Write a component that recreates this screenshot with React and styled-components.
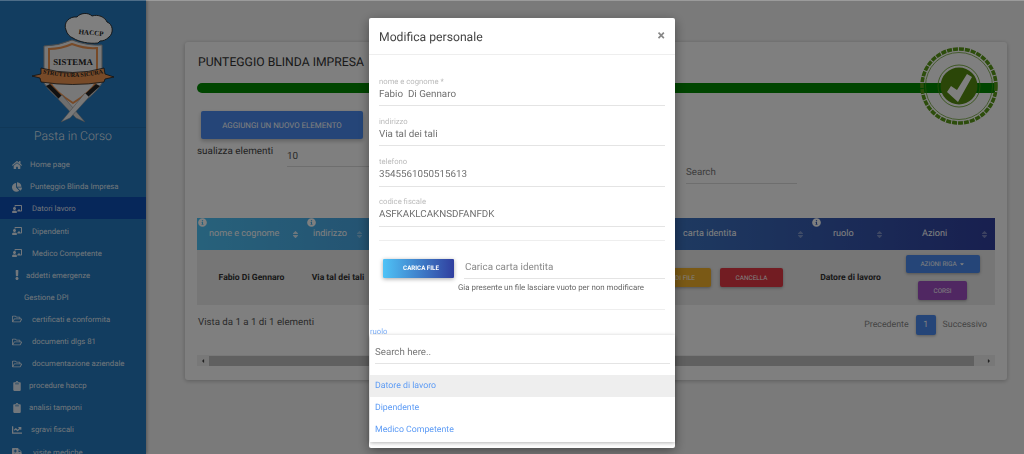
import styled, { createGlobalStyle } from 'styled-components'
import {
  FaHome,
  FaChartPie,
  FaChalkboardTeacher,
  FaExclamation,
  FaRegFolderOpen,
  FaClipboard,
  FaChartLine,
  FaAmbulance,
  FaSort,
  FaInfoCircle,
  FaCaretLeft,
  FaCaretRight,
  FaCaretDown,
} from 'react-icons/fa'

const GlobalStyle = createGlobalStyle`
  html, body {
    margin: 0;
    height: 100%;
    overflow: hidden;
    font-family: Roboto, "Liberation Sans", sans-serif;
    text-rendering: geometricPrecision;
  }
  * { box-sizing: border-box; }
  button { text-rendering: geometricPrecision; }
`

const Page = styled.div`
  display: flex;
  height: 454px;
  overflow: hidden;
  background: #f5f5f5;
`

const Sidebar = styled.aside`
  flex: 0 0 146px;
  background: #247ac0;
  color: rgba(255, 255, 255, 0.88);
  box-shadow: 1px 0 3px rgba(0, 0, 0, 0.3);
`

const LogoBox = styled.div`
  height: 128px;
  border-bottom: 1px solid rgba(0, 0, 0, 0.08);
  svg { display: block; }
`

const SiteName = styled.div`
  height: 25px;
  padding-top: 1px;
  font-size: 12.2px;
  line-height: 15px;
  text-align: center;
  font-weight: 300;
`

const NavList = styled.nav`
  display: flex;
  flex-direction: column;
`

const NavItem = styled.div`
  display: flex;
  align-items: center;
  height: 22.1px;
  flex: none;
  padding: 1.5px 0 0 12px;
  font-size: 7.75px;
  background: ${({ $active }) => ($active ? '#0c4eb4' : 'transparent')};
`

const NavIcon = styled.span`
  display: flex;
  width: ${({ $w }) => $w}px;
  flex: none;
  svg { width: 10px; height: 10px; }
`

const Main = styled.main`
  flex: 1;
  min-width: 0;
  padding: 42px 17px 0 39px;
`

const Card = styled.section`
  position: relative;
  height: 338px;
  padding: 12px;
  background: #fff;
  border-radius: 3px;
  box-shadow: 0 1px 4px rgba(0, 0, 0, 0.25);
`

const CardTitle = styled.h2`
  margin: 0 0 14px 1px;
  padding-top: 1px;
  height: 15px;
  font-size: 12.2px;
  line-height: 14px;
  font-weight: 400;
  color: #333;
`

const Progress = styled.div`
  height: 10px;
  background: #008a00;
  border-radius: 5px 0 0 5px;
`

const Stamp = styled.svg`
  position: absolute;
  right: 7px;
  top: 3px;
`

const AddButton = styled.button`
  display: block;
  width: 162px;
  height: 28px;
  margin: 18px 0 0 4px;
  border: 0;
  border-radius: 2px;
  background: #4a8bf0;
  color: #fff;
  font: 400 7.9px Roboto, sans-serif;
  box-shadow: 0 2px 4px rgba(0, 0, 0, 0.25);
`

const Controls = styled.div`
  display: flex;
  height: 41px;
  margin-top: 4px;
`

const LengthLabel = styled.span`
  width: 90px;
  padding-top: 2px;
  font-size: 9.9px;
  line-height: 14px;
  color: #444;
`

const LengthSelect = styled.div`
  width: 83px;
  height: 24px;
  padding-top: 7px;
  font-size: 9.9px;
  line-height: 14px;
  color: #555;
  border-bottom: 1px solid #ddd;
`

const SearchBox = styled.div`
  width: 111px;
  height: 24px;
  margin: 17px 0 0 316px;
  padding-top: 6px;
  font-size: 9.7px;
  line-height: 14px;
  color: #777;
  border-bottom: 1px solid #ddd;
`

const TableWrap = styled.div`
  margin-top: 34px;
`

const TableGrid = styled.div`
  display: grid;
  grid-template-columns: 109px 64px 150px 150px 141px 79px 105px;
`

const HeadRow = styled(TableGrid)`
  height: 32px;
  color: #fff;
  background: linear-gradient(to right, #4fc3f7, #303f9f);
`

const HeadCell = styled.div`
  position: relative;
  display: flex;
  align-items: center;
  justify-content: space-between;
  padding: 0 7px 0 ${({ $left }) => $left}px;
  font-size: 9.1px;
  white-space: nowrap;
`

const InfoBadge = styled(FaInfoCircle)`
  position: absolute;
  left: 1px;
  top: 0;
  width: 9px;
  height: 9px;
  color: #fff;
`

const SortIcon = styled(FaSort)`
  width: 7px;
  height: 9px;
  flex: none;
  opacity: ${({ $current }) => ($current ? 0.8 : 0.35)};
`

const BodyRow = styled(TableGrid)`
  height: 55px;
  background: #ececec;
`

const BodyCell = styled.div`
  display: flex;
  align-items: center;
  justify-content: ${({ $end }) => ($end ? 'flex-end' : 'center')};
  gap: 9px;
  padding-right: ${({ $end }) => ($end ? '28px' : '0')};
  font-size: 8.6px;
  font-weight: 700;
  color: #333;
  white-space: nowrap;
`

const ActionCell = styled.div`
  display: flex;
  flex-direction: column;
  align-items: center;
  gap: 8px;
  padding-top: 5px;
`

const RowButton = styled.button`
  display: flex;
  align-items: center;
  justify-content: center;
  gap: 2px;
  flex: none;
  width: ${({ $w }) => ($w ? `${$w}px` : 'auto')};
  height: ${({ $h }) => $h || 19}px;
  padding: 0 16px;
  border: 0;
  border-radius: 2px;
  background: ${({ $bg }) => $bg};
  color: #fff;
  font: 400 6.4px Roboto, sans-serif;
  white-space: nowrap;
  box-shadow: 0 1px 3px rgba(0, 0, 0, 0.3);
  svg { width: 6px; height: 6px; flex: none; }
`

const Footer = styled.div`
  display: flex;
  align-items: center;
  justify-content: space-between;
  height: 20px;
  margin-top: 10px;
  padding: 0 8px 0 1px;
  font-size: 9.7px;
  color: #555;
`

const RowCount = styled.span`
  margin-bottom: 6px;
`

const Pagination = styled.div`
  display: flex;
  align-items: center;
  gap: 7px;
  font-size: 8.8px;
  color: #888;
`

const PageNumber = styled.span`
  width: 20px;
  height: 20px;
  border-radius: 2px;
  line-height: 20px;
  text-align: center;
  color: #fff;
  background: #4a8bf0;
  box-shadow: 0 1px 3px rgba(0, 0, 0, 0.3);
`

const ScrollBar = styled.div`
  display: flex;
  align-items: center;
  justify-content: space-between;
  height: 11px;
  margin-top: 20px;
  background: #f1f1f1;
  color: #444;
  svg { width: 6px; height: 6px; flex: none; margin: 0 3px; }
`

const ScrollThumb = styled.div`
  flex: 1;
  height: 10px;
  margin: 0 9px 0 0;
  background: #c1c1c1;
`

const Backdrop = styled.div`
  position: fixed;
  inset: 0;
  background: rgba(0, 0, 0, 0.5);
  border-top: 1px solid rgba(255, 255, 255, 0.25);
`

const Modal = styled.div`
  position: fixed;
  left: 369px;
  top: 18px;
  width: 306px;
  height: 430px;
  display: flex;
  flex-direction: column;
  background: #fff;
  border-radius: 2px;
  box-shadow: 0 3px 12px rgba(0, 0, 0, 0.4);
`

const ModalHeader = styled.header`
  display: flex;
  align-items: center;
  justify-content: space-between;
  height: 37px;
  flex: none;
  padding: 0 10px;
  border-bottom: 1px solid #eee;
`

const ModalTitle = styled.h3`
  margin: 2px 0 0;
  font-size: 12.2px;
  font-weight: 400;
  color: #444;
`

const CloseMark = styled.span`
  font-size: 14px;
  font-weight: 700;
  line-height: 14px;
  color: #888;
`

const Form = styled.div`
  padding: 20px 10px 0;
`

const Field = styled.div`
  height: 40.3px;
  padding-top: 10.5px;
  border-bottom: 1px solid #e4e4e4;
  &:first-child { height: 31px; padding-top: 1.5px; }
`

const FieldLabel = styled.div`
  font-size: 7.7px;
  line-height: 9px;
  color: #bbb;
`

const FieldValue = styled.div`
  margin-top: 2px;
  font-size: 9.8px;
  line-height: 14px;
  color: #707070;
  white-space: pre;
`

const Divider = styled.hr`
  margin: ${({ $top }) => $top}px 0 0;
  border: 0;
  border-top: 1px solid #eee;
`

const UploadRow = styled.div`
  display: flex;
  margin-top: 18px;
  padding-left: 4px;
`

const UploadButton = styled.button`
  width: 71px;
  height: 19px;
  padding: 0 0 0 5px;
  border: 0;
  border-radius: 1px;
  background: linear-gradient(to right, #4fc3f7, #303f9f);
  color: #fff;
  font: 700 6.2px Roboto, sans-serif;
  box-shadow: 0 1px 4px rgba(0, 0, 0, 0.35);
`

const UploadInput = styled.div`
  flex: 1;
  height: 20px;
  margin-left: 10px;
  padding: 2px 0 0 1px;
  font-size: 9.85px;
  line-height: 14px;
  color: #888;
  border-bottom: 1px solid #e4e4e4;
`

const UploadHint = styled.div`
  margin: 4px 0 0 79px;
  font-size: 7.9px;
  line-height: 10px;
  color: #666;
`

const RoleLabel = styled.div`
  margin: 17px 0 0 1px;
  font-size: 7.7px;
  line-height: 9px;
  color: #7fb0f7;
`

const RolePanel = styled.div`
  position: relative;
  height: 107px;
  margin: -1px 0 0 1px;
  background: #fff;
  box-shadow: 0 1px 4px rgba(0, 0, 0, 0.3);
`

const RoleSearch = styled.div`
  height: 29px;
  margin: 0 5px 0 5px;
  padding-top: 11px;
  font-size: 9.7px;
  line-height: 14px;
  color: #777;
  border-bottom: 1px solid #e4e4e4;
`

const RoleList = styled.div`
  margin-top: 11px;
`

const RoleOption = styled.div`
  height: 22px;
  padding-left: 5px;
  font-size: 8.75px;
  line-height: 22px;
  color: #5c9bf5;
  background: ${({ $selected }) => ($selected ? '#eee' : 'transparent')};
`

const navItems = [
  { icon: FaHome, w: 18, label: 'Home page' },
  { icon: FaChartPie, w: 18, label: 'Punteggio Blinda Impresa' },
  { icon: FaChalkboardTeacher, w: 20, label: 'Datori lavoro', active: true },
  { icon: FaChalkboardTeacher, w: 20, label: 'Dipendenti' },
  { icon: FaChalkboardTeacher, w: 20, label: 'Medico Competente' },
  { icon: FaExclamation, w: 14, label: 'addetti emergenze' },
  { w: 12, label: 'Gestione DPI' },
  { icon: FaRegFolderOpen, w: 20, label: 'certificati e conformita' },
  { icon: FaRegFolderOpen, w: 20, label: 'documenti dlgs 81' },
  { icon: FaRegFolderOpen, w: 20, label: 'documentazione aziendale' },
  { icon: FaClipboard, w: 17, label: 'procedure haccp' },
  { icon: FaClipboard, w: 17, label: 'analisi tamponi' },
  { icon: FaChartLine, w: 19, label: 'sgravi fiscali' },
  { icon: FaAmbulance, w: 21, label: 'visite mediche' },
]

const formFields = [
  { label: 'nome e cognome *', value: 'Fabio  Di Gennaro' },
  { label: 'indirizzo', value: 'Via tal dei tali' },
  { label: 'telefono', value: '3545561050515613' },
  { label: 'codice fiscale', value: 'ASFKAKLCAKNSDFANFDK' },
]

function Logo() {
  return (
    <svg width="146" height="127" viewBox="0 0 146 127">
      <path
        d="M66 30c-3-7 3-14 11-13 3-4 11-5 15-1 6-2 13 1 15 6 6 2 7 11 2 15-3 3-6 4-9 4l-2 2c-9 1-19-1-25-5-3-1-6-4-7-8z"
        fill="#fff"
        stroke="#222"
        strokeWidth="0.9"
      />
      <text x="91" y="35" fontFamily="Liberation Serif, serif" fontSize="7" fontWeight="700" fill="#222" textAnchor="middle" transform="rotate(5 91 33)">
        HACCP
      </text>
      <path d="M44 46q14 0 28-6q15 6 30 5v38q-7 12-29 26q-22-14-29-26z" fill="#f0f0f0" stroke="#999" strokeWidth="1" />
      <path d="M49 49q12 0 23-5q13 5 25 4v33q-6 11-24 22q-18-11-24-22z" fill="none" stroke="#ee9450" strokeWidth="2" />
      <text x="73" y="65" fontFamily="Liberation Serif, serif" fontSize="8.8" fontWeight="700" fill="#222" textAnchor="middle">
        SISTEMA
      </text>
      <path d="M32 76l9-2v-6q32 9 63 0l1 6 9 3-9 2-1 3q-31 5-63 0l-1-4z" fill="#ee9450" stroke="#222" strokeWidth="0.8" />
      <path id="ribbonLine" d="M42 73q31 8 62 0" fill="none" />
      <text fontFamily="Liberation Serif, serif" fontSize="6" fontWeight="700" fill="#222" textAnchor="middle">
        <textPath href="#ribbonLine" startOffset="50%">STRUTTURA SICURA</textPath>
      </text>
      <path d="M46 86l4-2 12 12-3 3z" fill="#222" />
      <path d="M100 86l-4-2-11 10 3 3z" fill="#222" />
      <path d="M58 99l4-4 23 27-9-4z" fill="#ddd" stroke="#888" strokeWidth="0.5" />
      <path d="M89 97l-4-4-24 29 9-4z" fill="#f0f0f0" stroke="#888" strokeWidth="0.5" />
    </svg>
  )
}

function ApprovedStamp() {
  return (
    <Stamp width="82" height="82" viewBox="0 0 82 82">
      <circle cx="41" cy="41" r="37" fill="none" stroke="#5a9a18" strokeWidth="3.6" strokeDasharray="5 1" />
      <circle cx="41" cy="41" r="33.5" fill="none" stroke="#5a9a18" strokeWidth="0.7" />
      <circle cx="41" cy="41" r="21" fill="none" stroke="#5a9a18" strokeWidth="0.8" />
      <circle cx="41" cy="41" r="18.5" fill="#568c10" />
      <path d="M29 47l4-6 6 4 10-16 5 3-14 25z" fill="#fff" />
    </Stamp>
  )
}

export default function App() {
  return (
    <>
      <GlobalStyle />
      <Page>
        <Sidebar>
          <LogoBox>
            <Logo />
          </LogoBox>
          <SiteName>Pasta in Corso</SiteName>
          <NavList>
            {navItems.map((item) => {
              const Icon = item.icon
              return (
                <NavItem key={item.label} $active={item.active}>
                  <NavIcon $w={item.w}>{Icon && <Icon />}</NavIcon>
                  {item.label}
                </NavItem>
              )
            })}
          </NavList>
        </Sidebar>
        <Main>
          <Card>
            <CardTitle>PUNTEGGIO BLINDA IMPRESA</CardTitle>
            <Progress />
            <ApprovedStamp />
            <AddButton>AGGIUNGI UN NUOVO ELEMENTO</AddButton>
            <Controls>
              <LengthLabel>sualizza elementi</LengthLabel>
              <LengthSelect>10</LengthSelect>
              <SearchBox>Search</SearchBox>
            </Controls>
            <TableWrap>
              <HeadRow>
                <HeadCell $left={12}>
                  <InfoBadge />
                  nome e cognome
                  <SortIcon $current />
                </HeadCell>
                <HeadCell $left={7}>
                  <InfoBadge />
                  indirizzo
                  <SortIcon />
                </HeadCell>
                <HeadCell $left={12}>
                  telefono
                  <SortIcon />
                </HeadCell>
                <HeadCell $left={12}>
                  codice fiscale
                  <SortIcon />
                </HeadCell>
                <HeadCell $left={13}>
                  carta identita
                  <SortIcon />
                </HeadCell>
                <HeadCell $left={22}>
                  <InfoBadge />
                  ruolo
                  <SortIcon />
                </HeadCell>
                <HeadCell $left={32}>
                  Azioni
                  <SortIcon />
                </HeadCell>
              </HeadRow>
              <BodyRow>
                <BodyCell>Fabio Di Gennaro</BodyCell>
                <BodyCell>Via tal dei tali</BodyCell>
                <BodyCell>3545561050515613</BodyCell>
                <BodyCell>ASFKAKLCAKNSDFANFDK</BodyCell>
                <BodyCell $end>
                  <RowButton $bg="#f5b32a">VEDI FILE</RowButton>
                  <RowButton $bg="#e53945" $w={63}>CANCELLA</RowButton>
                </BodyCell>
                <BodyCell>Datore di lavoro</BodyCell>
                <ActionCell>
                  <RowButton $bg="#4a8bf0" $w={74} $h={18}>
                    AZIONI RIGA <FaCaretDown />
                  </RowButton>
                  <RowButton $bg="#a04fc4" $w={49}>CORSI</RowButton>
                </ActionCell>
              </BodyRow>
            </TableWrap>
            <Footer>
              <RowCount>Vista da 1 a 1 di 1 elementi</RowCount>
              <Pagination>
                Precedente
                <PageNumber>1</PageNumber>
                Successivo
              </Pagination>
            </Footer>
            <ScrollBar>
              <FaCaretLeft />
              <ScrollThumb />
              <FaCaretRight />
            </ScrollBar>
          </Card>
        </Main>
      </Page>
      <Backdrop />
      <Modal>
        <ModalHeader>
          <ModalTitle>Modifica personale</ModalTitle>
          <CloseMark>×</CloseMark>
        </ModalHeader>
        <Form>
          {formFields.map((field) => (
            <Field key={field.label}>
              <FieldLabel>{field.label}</FieldLabel>
              <FieldValue>{field.value}</FieldValue>
            </Field>
          ))}
          <Divider $top={13} />
          <UploadRow>
            <UploadButton>CARICA FILE</UploadButton>
            <UploadInput>Carica carta identita</UploadInput>
          </UploadRow>
          <UploadHint>Gia presente un file lasciare vuoto per non modificare</UploadHint>
          <Divider $top={16} />
        </Form>
        <RoleLabel>ruolo</RoleLabel>
        <RolePanel>
          <RoleSearch>Search here..</RoleSearch>
          <RoleList>
            <RoleOption $selected>Datore di lavoro</RoleOption>
            <RoleOption>Dipendente</RoleOption>
            <RoleOption>Medico Competente</RoleOption>
          </RoleList>
        </RolePanel>
      </Modal>
    </>
  )
}
